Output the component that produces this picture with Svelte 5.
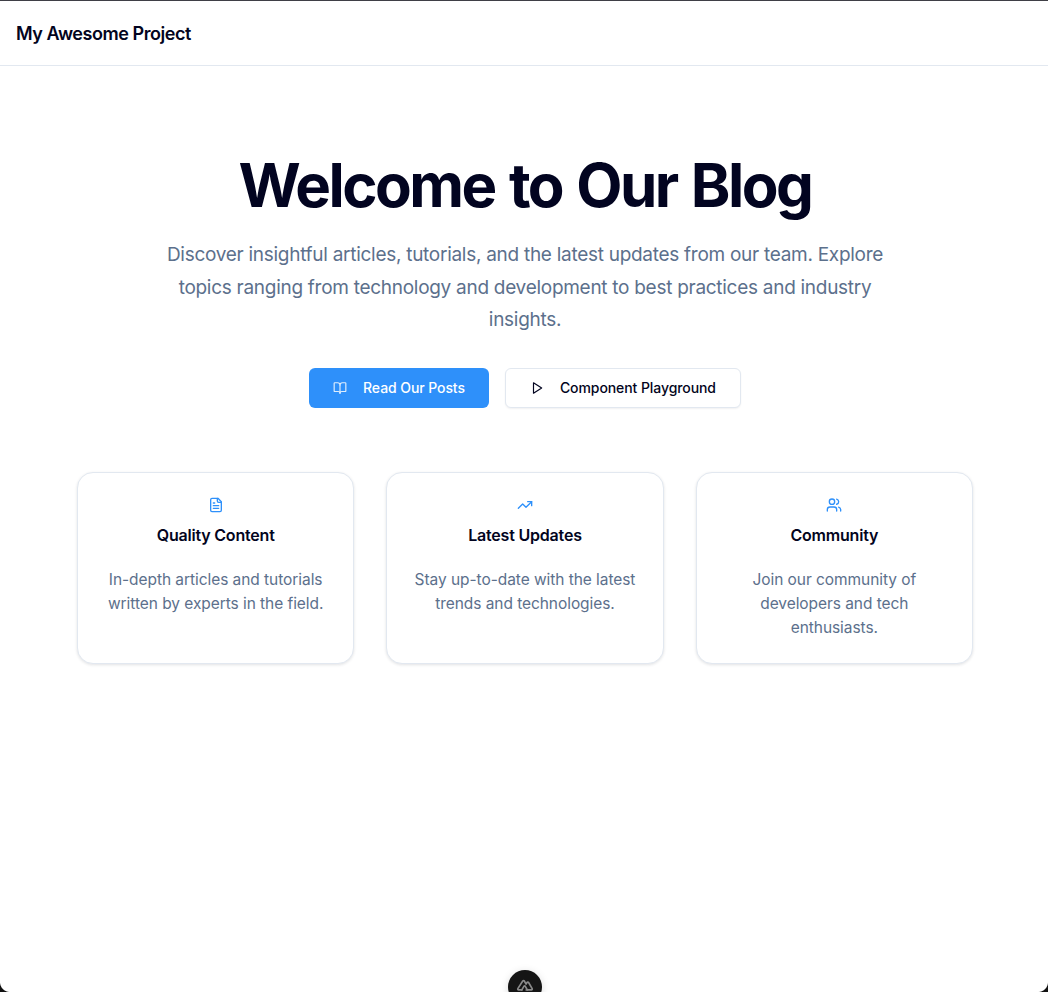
<script lang="ts">
  const features = [
    {
      title: "Quality Content",
      text: "In-depth articles and tutorials written by experts in the field.",
      icon: "file"
    },
    {
      title: "Latest Updates",
      text: "Stay up-to-date with the latest trends and technologies.",
      icon: "trend"
    },
    {
      title: "Community",
      text: "Join our community of developers and tech enthusiasts.",
      icon: "users"
    }
  ];
</script>

<div class="page">
  <header class="topbar">
    <span class="brand">My Awesome Project</span>
  </header>

  <main class="hero">
    <h1>Welcome to Our Blog</h1>
    <p class="lead">
      Discover insightful articles, tutorials, and the latest updates from our team. Explore
      topics ranging from technology and development to best practices and industry insights.
    </p>

    <div class="actions">
      <a class="btn primary" href="#posts">
        <svg viewBox="0 0 24 24" class="btn-icon" aria-hidden="true">
          <path d="M12 7v14" />
          <path d="M3 18a1 1 0 0 1-1-1V4a1 1 0 0 1 1-1h5a4 4 0 0 1 4 4 4 4 0 0 1 4-4h5a1 1 0 0 1 1 1v13a1 1 0 0 1-1 1h-6a3 3 0 0 0-3 3 3 3 0 0 0-3-3z" />
        </svg>
        Read Our Posts
      </a>
      <a class="btn outline" href="#playground">
        <svg viewBox="0 0 24 24" class="btn-icon" aria-hidden="true">
          <path d="M6 3l14 9-14 9z" />
        </svg>
        Component Playground
      </a>
    </div>

    <section class="cards">
      {#each features as feature (feature.title)}
        <article class="card">
          <svg viewBox="0 0 24 24" class="card-icon" aria-hidden="true">
            {#if feature.icon === "file"}
              <path d="M15 2H6a2 2 0 0 0-2 2v16a2 2 0 0 0 2 2h12a2 2 0 0 0 2-2V7z" />
              <path d="M14 2v4a2 2 0 0 0 2 2h4" />
              <path d="M10 9H8" />
              <path d="M16 13H8" />
              <path d="M16 17H8" />
            {:else if feature.icon === "trend"}
              <path d="M22 7l-8.5 8.5-5-5L2 17" />
              <path d="M16 7h6v6" />
            {:else}
              <path d="M16 21v-2a4 4 0 0 0-4-4H6a4 4 0 0 0-4 4v2" />
              <circle cx="9" cy="7" r="4" />
              <path d="M22 21v-2a4 4 0 0 0-3-3.87" />
              <path d="M16 3.13a4 4 0 0 1 0 7.75" />
            {/if}
          </svg>
          <h3>{feature.title}</h3>
          <p>{feature.text}</p>
        </article>
      {/each}
    </section>
  </main>

  <button class="devtools" type="button" aria-label="Open devtools">
    <svg viewBox="0 0 24 24" aria-hidden="true">
      <path d="M13.5 15.5h6.2a1 1 0 0 0 .9-1.5l-4.3-7.4a1.1 1.1 0 0 0-1.9 0l-1.1 1.9-2.1-3.7a1.1 1.1 0 0 0-1.9 0L3.4 14a1 1 0 0 0 .9 1.5h3.9" />
      <path d="M8.2 15.5l2.6-4.5a.8.8 0 0 1 1.4 0l2.6 4.5" />
    </svg>
  </button>
  <span class="corner left"></span>
  <span class="corner right"></span>
</div>

<style>
  :global(body) {
    margin: 0;
    background: #fff;
    font-family: Inter, "Liberation Sans", sans-serif;
    color: #020420;
  }

  .page {
    height: 992px;
    overflow: hidden;
    position: relative;
    box-sizing: border-box;
    border-top: 1px solid #3f3f46;
  }

  .topbar {
    height: 64px;
    padding: 0 16px;
    display: flex;
    align-items: center;
    border-bottom: 1px solid #e2e8f0;
  }

  .brand {
    font-size: 18px;
    font-weight: 600;
    letter-spacing: -0.45px;
    color: #020420;
  }

  .hero {
    box-sizing: border-box;
    width: 896px;
    margin-left: 77px;
    padding-top: 80px;
    text-align: center;
  }

  h1 {
    margin: 0;
    font-size: 60px;
    line-height: 1;
    padding: 9px 0;
    font-weight: 700;
    letter-spacing: -2.5px;
    word-spacing: 2.4px;
    color: #020420;
  }

  .lead {
    width: 768px;
    margin: 15px auto 0;
    font-size: 19px;
    line-height: 32.5px;
    letter-spacing: -0.28px;
    color: #5c708c;
  }

  .actions {
    display: flex;
    justify-content: center;
    gap: 16px;
    margin-top: 31px;
  }

  .btn {
    box-sizing: border-box;
    height: 40px;
    display: inline-flex;
    align-items: center;
    gap: 16px;
    padding: 0 24px;
    border-radius: 6px;
    font-size: 14px;
    font-weight: 500;
    letter-spacing: -0.08px;
    text-decoration: none;
  }

  .btn-icon {
    width: 14px;
    height: 14px;
    fill: none;
    stroke: currentColor;
    stroke-width: 2;
    stroke-linecap: round;
    stroke-linejoin: round;
  }

  .primary {
    background: #2e90fa;
    color: #fff;
  }

  .primary .btn-icon {
    opacity: 0.85;
  }

  .outline {
    background: #fff;
    color: #020420;
    border: 1px solid #e2e8f0;
    box-shadow: 0 1px 2px rgba(15, 23, 42, 0.06);
  }

  .cards {
    display: grid;
    grid-template-columns: repeat(3, 1fr);
    gap: 32px;
    margin-top: 64px;
  }

  .card {
    box-sizing: border-box;
    height: 192px;
    padding: 24px;
    border: 1px solid #e2e8f0;
    border-radius: 16px;
    background: #fff;
    box-shadow: 0 1px 3px rgba(15, 23, 42, 0.12);
  }

  .card-icon {
    display: block;
    width: 16px;
    height: 16px;
    margin: 0 auto;
    fill: none;
    stroke: #2e90fa;
    stroke-width: 2;
    stroke-linecap: round;
    stroke-linejoin: round;
  }

  h3 {
    margin: 10px 0 0;
    font-size: 16px;
    line-height: 24px;
    font-weight: 600;
    letter-spacing: -0.2px;
    color: #020420;
  }

  .card p {
    margin: 21px 0 0;
    font-size: 15.5px;
    line-height: 24px;
    letter-spacing: -0.06px;
    color: #5c708c;
  }

  .devtools {
    position: absolute;
    left: 508px;
    bottom: -12px;
    width: 34px;
    height: 34px;
    padding: 7px;
    border: 0;
    border-radius: 50%;
    background: #151515;
    box-shadow: 0 2px 8px rgba(0, 0, 0, 0.15);
  }

  .devtools svg {
    display: block;
    fill: none;
    stroke: #8a8a8a;
    stroke-width: 2;
    stroke-linejoin: round;
    stroke-linecap: round;
  }

  .corner {
    position: absolute;
    bottom: 0;
    width: 10px;
    height: 10px;
  }

  .corner.left {
    left: 0;
    background: radial-gradient(circle at 100% 0, transparent 9.5px, #111 10.5px);
  }

  .corner.right {
    right: 0;
    background: radial-gradient(circle at 0 0, transparent 9.5px, #111 10.5px);
  }
</style>
